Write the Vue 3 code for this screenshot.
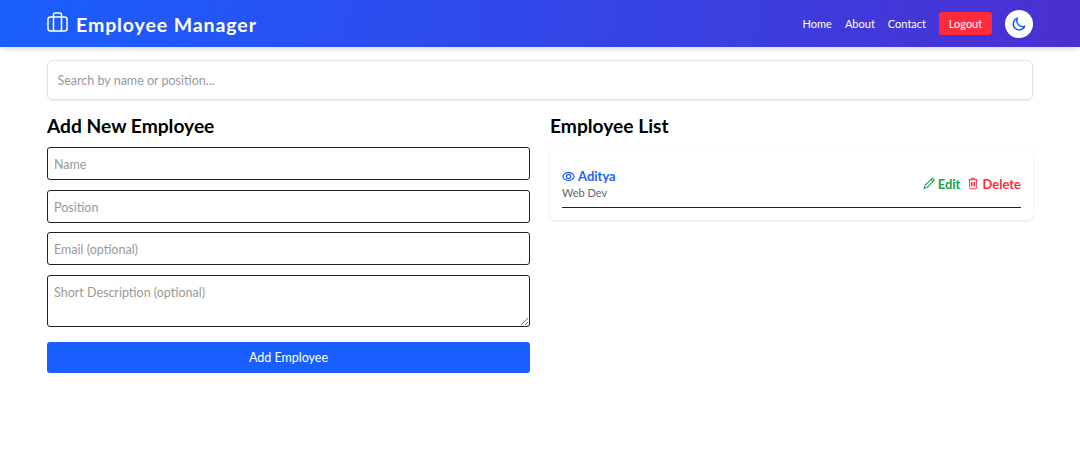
<script setup>
const fields = ['Name', 'Position', 'Email (optional)']
</script>

<template>
  <div class="page">
    <header class="nav">
      <div class="brand">
        <svg class="brand-icon" viewBox="0 0 21 20" fill="none" stroke="currentColor" stroke-width="1.500"><rect x="1" y="5" width="19" height="14" rx="2.500"/><path d="M6.500 5v14M14.500 5v14M6.500 5V2.800A1.800 1.800 0 0 1 8.300 1h4.400a1.800 1.800 0 0 1 1.800 1.800V5"/></svg>
        <span class="brand-text">Employee Manager</span>
      </div>
      <nav class="links">
        <a>Home</a>
        <a>About</a>
        <a>Contact</a>
        <button class="logout">Logout</button>
        <button class="theme">
          <svg viewBox="0 0 16 16" fill="none" stroke="currentColor" stroke-width="1.700" stroke-linejoin="round"><path d="M6.200 1.500A6.800 6.800 0 1 0 14.600 10.500 6.600 6.600 0 0 1 6.200 1.500z"/></svg>
        </button>
      </nav>
    </header>

    <main class="content">
      <input class="search" placeholder="Search by name or position..." />
      <div class="columns">
        <section>
          <h2>Add New Employee</h2>
          <form class="form" @submit.prevent>
            <input v-for="f in fields" :key="f" class="field" :placeholder="f" />
            <textarea class="field area" placeholder="Short Description (optional)"></textarea>
            <button class="add">Add Employee</button>
          </form>
        </section>
        <section>
          <h2>Employee List</h2>
          <div class="card">
            <div class="row">
              <div>
                <div class="name">
                  <svg viewBox="0 0 16 16" fill="none" stroke="currentColor" stroke-width="1.400"><path d="M.8 8S3.500 3 8 3s7.200 5 7.200 5-2.700 5-7.200 5S.8 8 .8 8z"/><circle cx="8" cy="8" r="2.600"/></svg>
                  <span>Aditya</span>
                </div>
                <div class="role">Web Dev</div>
              </div>
              <div class="actions">
                <span class="edit">
                  <svg viewBox="0 0 16 16" fill="none" stroke="currentColor" stroke-width="1.400" stroke-linejoin="round"><path d="M12.400.9l2.700 2.700L5.400 13.300l-4 1.300 1.300-4zM10.600 2.800l2.600 2.600"/></svg>
                  Edit
                </span>
                <span class="delete">
                  <svg viewBox="0 0 16 16" fill="none" stroke="currentColor" stroke-width="1.300" stroke-linejoin="round"><path d="M2 3h12M3.500 3v10.500A1.500 1.500 0 0 0 5 15h6a1.500 1.500 0 0 0 1.500-1.500V3M5.800 3V1h4.400v2M6 6v6M8 6v6M10 6v6"/></svg>
                  Delete
                </span>
              </div>
            </div>
          </div>
        </section>
      </div>
    </main>
  </div>
</template>

<style>
html, body { margin: 0; background: #fff; }
</style>

<style scoped>
.page { width: 1080px; height: 468px; overflow: hidden; font-family: Lato, "Noto Sans", sans-serif; color: #000; }
.nav {
  height: 47px; box-sizing: border-box; padding: 0 47px; display: flex; align-items: center; justify-content: space-between;
  background: linear-gradient(100deg, #1a5fff, #4b2fd0); color: #fff; box-shadow: 0 2px 6px rgba(0,0,0,.15);
  position: relative;
}
.brand { display: flex; align-items: center; gap: 8px; font-size: 19.500px; font-weight: 700; letter-spacing: .9px; }
.brand-icon { width: 21px; height: 20px; margin-top: -3px; }
.brand-text { padding-top: 2px; }
.links { display: flex; align-items: center; font-size: 11px; }
.links a { margin-right: 13px; }
.logout { height: 23px; width: 53px; padding: 0; background: #ff2b3a; color: #fff; border: 0; border-radius: 3px; font: inherit; margin-right: 13px; }
.theme { width: 28px; height: 28px; border-radius: 50%; background: #fff; border: 0; padding: 0; color: #1a5fff; display: flex; align-items: center; justify-content: center; }
.theme svg { width: 14px; height: 14px; }
.content { padding: 13px 47px; }
.search { display: block; width: 100%; height: 40px; box-sizing: border-box; border: 1px solid #dee2e6; border-radius: 6px; padding: 0 9.500px; font: 12.500px Lato, sans-serif; box-shadow: 0 1px 2px rgba(0,0,0,.08); outline: none; }
input::placeholder, textarea::placeholder { color: #999; opacity: 1; }
.columns { display: grid; grid-template-columns: 1fr 1fr; gap: 20px; margin-top: 14px; }
h2 { margin: -1px 0 8px; font-size: 19.200px; line-height: 26px; font-weight: 700; }
.form { display: flex; flex-direction: column; gap: 9.600px; }
.field { display: block; width: 100%; height: 33px; box-sizing: border-box; border: 1px solid #222; border-radius: 3px; padding: 2px 6px 0; font: 12.500px Lato, sans-serif; outline: none; }
.area { height: 52px; padding: 9px 6px; }
.add { height: 31px; margin-top: 6px; border: 0; border-radius: 3px; background: #1a5fff; color: #fff; font: 12.500px Lato, sans-serif; }
.card { border-radius: 5px; padding: 12px; box-shadow: 0 1px 3px rgba(0,0,0,.12); }
.row { display: flex; align-items: center; justify-content: space-between; padding: 8px 0 7px; border-bottom: 1px solid #222; }
.name { display: flex; align-items: center; gap: 3px; color: #1a5fff; font-size: 13px; font-weight: 700; line-height: 18px; }
.name svg { width: 13px; height: 13px; }
.role { font-size: 11px; line-height: 15px; color: #666; margin-top: 0; }
.actions { display: flex; gap: 7px; font-size: 13px; font-weight: 700; }
.actions span { display: flex; align-items: center; gap: 3px; }
.actions svg { width: 12px; height: 13px; }
.edit { color: #16a34a; }
.delete { color: #ff2b3a; }
</style>
